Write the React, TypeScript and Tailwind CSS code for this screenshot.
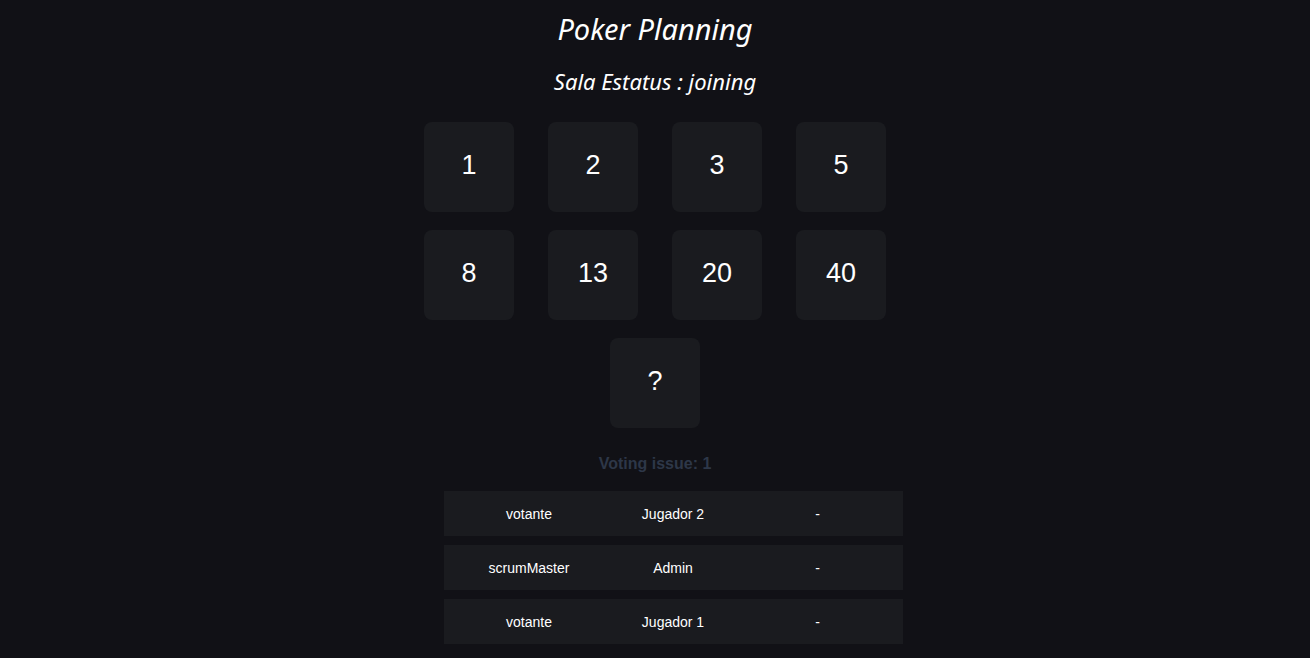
import React from "react";

const cards = ["1", "2", "3", "5", "8", "13", "20", "40", "?"];

const players = [
  { role: "votante", name: "Jugador 2", vote: "-" },
  { role: "scrumMaster", name: "Admin", vote: "-" },
  { role: "votante", name: "Jugador 1", vote: "-" },
];

export default function App() {
  return (
    <div className="min-h-[658px] bg-[#111116] text-white flex flex-col items-center font-['Liberation_Sans',Arial,sans-serif]">
      <h1 className="mt-[10px] text-[29px] leading-[38px] italic font-['Noto_Sans',sans-serif]">
        Poker Planning
      </h1>
      <h2 className="mt-[18px] text-[22px] leading-[30px] italic font-['Noto_Sans',sans-serif]">
        Sala Estatus : joining
      </h2>
      <div className="mt-[26px] w-[462px] flex flex-wrap justify-center gap-x-[34px] gap-y-[18px]">
        {cards.map((c) => (
          <div
            key={c}
            className="w-[90px] h-[90px] pb-[3px] rounded-[8px] bg-[#1a1b1f] flex items-center justify-center text-[27px] font-light"
          >
            {c}
          </div>
        ))}
      </div>
      <p className="mt-[26px] text-[16px] leading-[20px] font-bold text-[#2d3748]">
        Voting issue: 1
      </p>
      <div className="mt-[17px] ml-[37px] w-[459px] flex flex-col gap-[9px]">
        {players.map((p, i) => (
          <div
            key={i}
            className="h-[45px] pt-[1px] bg-[#1a1b1f] grid grid-cols-[170px_118px_171px] items-center text-center text-[14px]"
          >
            <span>{p.role}</span>
            <span>{p.name}</span>
            <span>{p.vote}</span>
          </div>
        ))}
      </div>
    </div>
  );
}
